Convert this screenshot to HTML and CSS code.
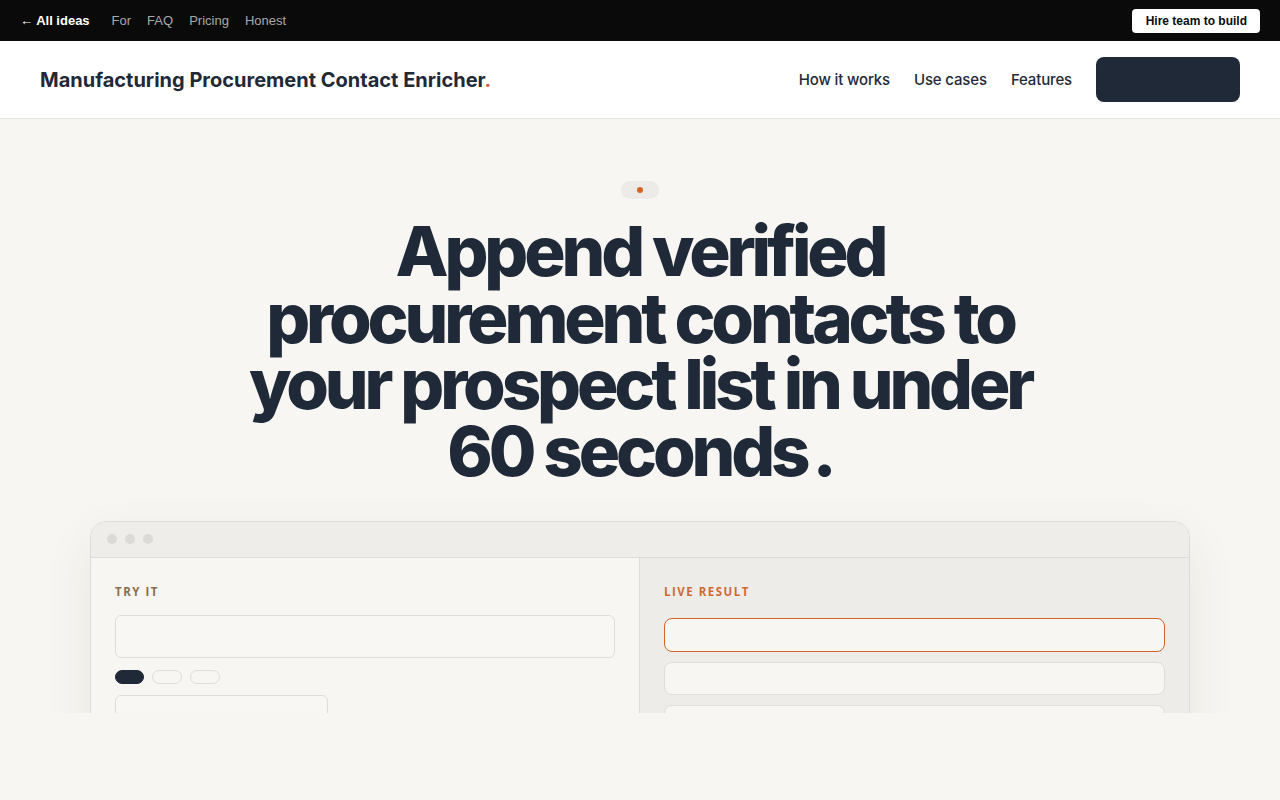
FILE: index.html
```html
<!DOCTYPE html>
<html lang="en">
<head>
<meta charset="utf-8">
<title>Manufacturing Procurement Contact Enricher</title>
<link rel="stylesheet" href="styles.css">
</head>
<body>
  <div class="topbar">
    <nav class="topbar-links">
      <a class="back" href="#">← All ideas</a>
      <a href="#">For</a>
      <a href="#">FAQ</a>
      <a href="#">Pricing</a>
      <a href="#">Honest</a>
    </nav>
    <a class="hire" href="#">Hire team to build</a>
  </div>

  <header class="site-header">
    <a class="logo" href="#">Manufacturing Procurement Contact Enricher<span class="dot">.</span></a>
    <nav class="main-nav">
      <a href="#">How it works</a>
      <a href="#">Use cases</a>
      <a href="#">Features</a>
      <span class="cta"></span>
    </nav>
  </header>

  <main class="hero">
    <div class="badge"><span class="badge-dot"></span></div>
    <h1 class="headline">Append verified procurement contacts to your prospect list in under 60 seconds&#8239;.</h1>

    <div class="window">
      <div class="window-bar">
        <span></span><span></span><span></span>
      </div>
      <div class="window-body">
        <section class="pane pane-input">
          <div class="label label-try">TRY IT</div>
          <div class="field"></div>
          <div class="chips">
            <span class="chip chip-on"></span>
            <span class="chip"></span>
            <span class="chip"></span>
          </div>
          <div class="field field-half"></div>
        </section>
        <section class="pane pane-result">
          <div class="label label-live">LIVE RESULT</div>
          <div class="row row-active"></div>
          <div class="row"></div>
          <div class="row"></div>
        </section>
      </div>
    </div>
  </main>
</body>
</html>
```

FILE: styles.css
```css
* { box-sizing: border-box; }

html, body {
  margin: 0;
  padding: 0;
  background: #f7f6f2;
  font-family: Inter, "Noto Sans", sans-serif;
  color: #1f2937;
}

a { text-decoration: none; color: inherit; }

/* dark utility strip */
.topbar {
  height: 41px;
  background: #0a0a0a;
  display: flex;
  align-items: center;
  justify-content: space-between;
  padding: 0 20px 0 20px;
  font-family: "Liberation Sans", Arial, sans-serif;
  font-size: 13px;
}
.topbar-links {
  display: flex;
  align-items: center;
  gap: 16px;
}
.topbar-links a { color: #a8a8a8; }
.topbar-links .back {
  color: #ffffff;
  font-weight: 700;
  margin-right: 6px;
}
.hire {
  background: #ffffff;
  color: #0a0a0a;
  font-weight: 700;
  font-size: 12px;
  padding: 0 13px 0 14px;
  height: 24px;
  line-height: 24px;
  border-radius: 4px;
}

/* site header */
.site-header {
  height: 78px;
  background: #ffffff;
  border-bottom: 1px solid #e7e5e0;
  display: flex;
  align-items: center;
  justify-content: space-between;
  padding: 0 40px;
}
.logo {
  font-size: 20px;
  font-weight: 700;
  letter-spacing: 0;
  color: #1f2937;
}
.logo .dot { color: #d2642a; }
.main-nav {
  display: flex;
  align-items: center;
  gap: 24px;
  font-size: 15px;
  font-weight: 500;
  letter-spacing: -0.01em;
}
.cta {
  display: block;
  width: 144px;
  height: 45px;
  border-radius: 8px;
  background: #1f2937;
}

/* hero */
.hero {
  height: 594px;
  overflow: hidden;
  display: flex;
  flex-direction: column;
  align-items: center;
  padding-top: 62px;
}
.badge {
  flex-shrink: 0;
  width: 38px;
  height: 18px;
  border-radius: 9px;
  background: #ecebe7;
  display: flex;
  align-items: center;
  justify-content: center;
}
.badge-dot {
  width: 6px;
  height: 6px;
  border-radius: 50%;
  background: #d2642a;
}
.headline {
  flex-shrink: 0;
  margin: 19px 0 0;
  max-width: 800px;
  text-align: center;
  font-size: 69px;
  line-height: 0.966;
  font-weight: 800;
  letter-spacing: -0.06em;
  color: #1f2937;
}

/* app preview window */
.window {
  flex-shrink: 0;
  margin-top: 36px;
  width: 1100px;
  border: 1px solid #dedcd7;
  border-radius: 16px;
  background: #f7f6f2;
  box-shadow: 0 20px 50px rgba(60, 50, 30, 0.08);
  overflow: hidden;
}
.window-bar {
  height: 36px;
  background: #efede9;
  border-bottom: 1px solid #dedcd7;
  display: flex;
  align-items: center;
  gap: 8px;
  padding-left: 16px;
}
.window-bar span {
  width: 10px;
  height: 10px;
  border-radius: 50%;
  background: #dcdad6;
}
.window-body {
  display: grid;
  grid-template-columns: 548px 1fr;
  min-height: 300px;
}
.pane { padding: 27px 24px; }
.pane-result {
  background: #eeece8;
  border-left: 1px solid #dedcd7;
}
.label {
  font-family: "Open Sans", Inter, sans-serif;
  font-size: 11.5px;
  font-weight: 700;
  letter-spacing: 0.13em;
  line-height: 14px;
}
.label-try { color: #8b6e4e; }
.label-live { color: #cf6a30; }

.field {
  margin-top: 16px;
  height: 43px;
  border: 1px solid #dfddd8;
  border-radius: 6px;
  background: #f8f7f3;
}
.field-half {
  margin-top: 11px;
  width: 213px;
}
.chips {
  display: flex;
  gap: 8px;
  margin-top: 12px;
}
.chip {
  width: 30px;
  height: 14px;
  border-radius: 7px;
  border: 1px solid #dfddd8;
}
.chip:first-child { width: 29px; }
.chip.chip-on {
  background: #1f2937;
  border-color: #1f2937;
}

.row {
  margin-top: 10px;
  height: 33px;
  border: 1px solid #dfddd8;
  border-radius: 8px;
  background: #f7f6f2;
}
.row-active {
  margin-top: 19px;
  height: 34px;
  border-color: #d2642a;
}
```
